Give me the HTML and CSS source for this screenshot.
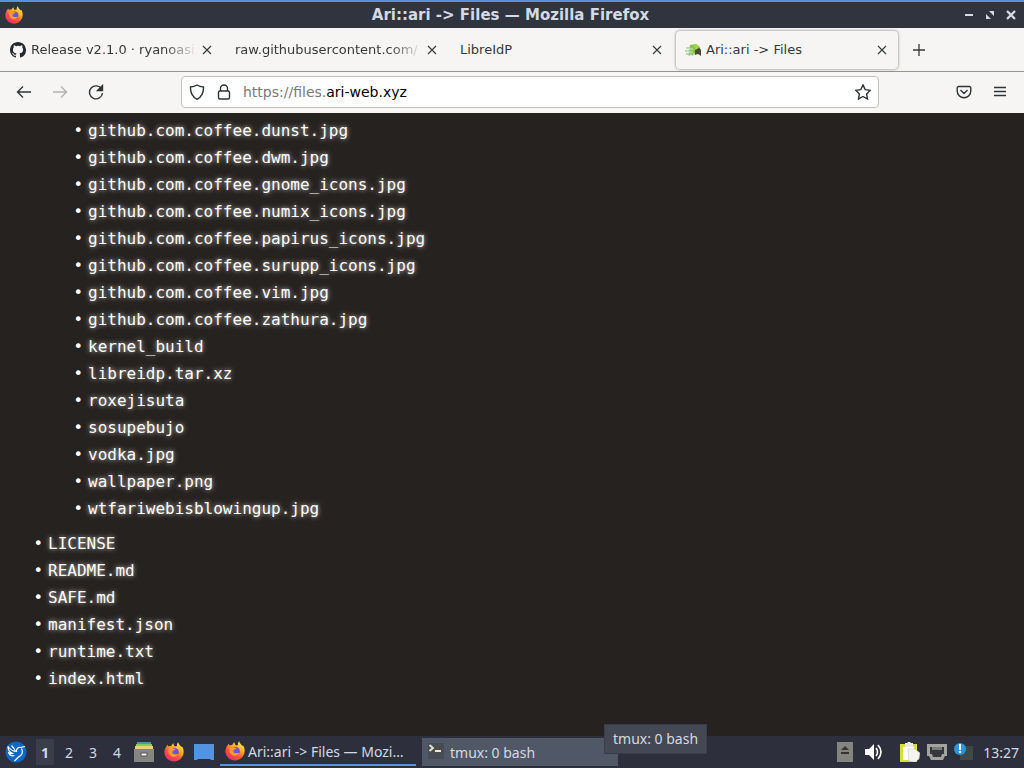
FILE: index.html
```html
<!DOCTYPE html>
<html lang="en">
<head>
    <meta charset="UTF-8">
    <meta name="viewport" content="width=device-width, initial-scale=1.0">
    <title>Ari::ari -&gt; Files</title>
    <link rel="stylesheet" href="styles.css">
</head>
<body>
    <svg class="sprite" aria-hidden="true">
        <defs>
            <linearGradient id="flame" x1="0.85" y1="0.05" x2="0.25" y2="1">
                <stop offset="0" stop-color="#fff04a"/>
                <stop offset="0.35" stop-color="#ffab25"/>
                <stop offset="0.65" stop-color="#ff5236"/>
                <stop offset="1" stop-color="#e3267c"/>
            </linearGradient>
            <radialGradient id="globe">
                <stop offset="0" stop-color="#4b6be0"/>
                <stop offset="1" stop-color="#8a3fc4"/>
            </radialGradient>
        </defs>
        <symbol id="firefox" viewBox="0 0 20 20">
            <path fill="url(#flame)" d="M2.6 4.2 3.5 2.8 4.6 4.5C5.5 4 6.3 3.9 7.2 4.1 7.6 2.8 8.5 1.9 9.6 1.3 9.4 2.6 10 3.6 11 4.4L13 4C12.8 2.4 13.2 1.2 14.2 0.2 14.7 2.3 16.2 3.5 17.4 5L17.9 4.2C19.3 6 19.8 8.3 19.6 10.6 19.1 15.8 15 19.6 10 19.6 4.8 19.6.6 15.6.4 10.6.3 8.2 1.1 6 2.6 4.2Z"/>
            <circle fill="url(#globe)" cx="10.4" cy="10.4" r="4.4"/>
            <path fill="#ff9a2b" d="M4.6 6.2C6.3 5 8.3 5.3 9.6 6.7L11.6 7C11 8.6 9.3 8.2 8.5 9.5 7.8 11 9 12.5 11 12.3 12.2 12.2 13 11.5 14.2 12.2 12.6 15.2 8.6 15.6 6.2 13.2 4.2 11.2 3.7 8.5 4.6 6.2Z"/>
        </symbol>
        <symbol id="close" viewBox="0 0 10 10">
            <path d="M1 1 9 9M9 1 1 9" fill="none" stroke="currentColor" stroke-width="1.1"/>
        </symbol>
    </svg>

    <header class="titlebar">
        <svg class="app-icon"><use href="#firefox"/></svg>
        <span class="window-title">Ari::ari -&gt; Files — Mozilla Firefox</span>
        <div class="window-buttons">
            <button aria-label="Minimize"><svg viewBox="0 0 10 10"><path d="M1 4h8v2H1z"/></svg></button>
            <button aria-label="Restore"><svg viewBox="0 0 10 10"><path d="M4 1h5v5zM1 4l5 5H1z"/></svg></button>
            <button aria-label="Close"><svg viewBox="0 0 10 10"><path d="M1 1 9 9M9 1 1 9" stroke="currentColor" stroke-width="2.4"/></svg></button>
        </div>
    </header>

    <nav class="tabs" aria-label="Tabs">
        <div class="tab">
            <svg class="favicon" viewBox="0 0 16 16"><path fill="#24292f" d="M8 0C3.58 0 0 3.58 0 8c0 3.54 2.29 6.53 5.47 7.59.4.07.55-.17.55-.38 0-.19-.01-.82-.01-1.49-2.01.37-2.53-.49-2.69-.94-.09-.23-.48-.94-.82-1.13-.28-.15-.68-.52-.01-.53.63-.01 1.08.58 1.23.82.72 1.21 1.87.87 2.33.66.07-.52.28-.87.51-1.07-1.78-.2-3.64-.89-3.64-3.95 0-.87.31-1.59.82-2.15-.08-.2-.36-1.02.08-2.12 0 0 .67-.21 2.2.82A7.6 7.6 0 0 1 8 3.86c.68 0 1.36.09 2 .27 1.53-1.04 2.2-.82 2.2-.82.44 1.1.16 1.92.08 2.12.51.56.82 1.27.82 2.15 0 3.07-1.87 3.75-3.65 3.95.29.25.54.73.54 1.48 0 1.07-.01 1.93-.01 2.2 0 .21.15.46.55.38A8 8 0 0 0 16 8c0-4.42-3.58-8-8-8z"/></svg>
            <span class="tab-label faded">Release v2.1.0 · ryanoasi</span>
            <button aria-label="Close tab"><svg><use href="#close"/></svg></button>
        </div>
        <div class="tab">
            <span class="tab-label faded">raw.githubusercontent.com/</span>
            <button aria-label="Close tab"><svg><use href="#close"/></svg></button>
        </div>
        <div class="tab">
            <span class="tab-label">LibreIdP</span>
            <button aria-label="Close tab"><svg><use href="#close"/></svg></button>
        </div>
        <div class="tab active">
            <svg class="favicon" viewBox="0 0 16 16">
                <path fill="#8cc63f" d="M5 3 11 2l3 2 1 4-4 3-7 1z"/>
                <path fill="#4d4a32" d="M10 7l4-2 2 3v6l-3-2-3 1z"/>
                <path fill="#a9d63c" d="M8 3h5l1 3-4 2z"/>
                <path d="M1 6h10M0 9h10M1 12h9M6 3 4 14M9 3 7 14" stroke="#7cc45c" fill="none"/>
                <path d="M3 7h5M2 10h6" stroke="#d6eec4" fill="none"/>
            </svg>
            <span class="tab-label">Ari::ari -&gt; Files</span>
            <button aria-label="Close tab"><svg><use href="#close"/></svg></button>
        </div>
        <button class="new-tab" aria-label="New tab"><svg viewBox="0 0 12 12"><path d="M6 0v12M0 6h12" stroke="currentColor" stroke-width="1.3"/></svg></button>
    </nav>

    <div class="toolbar">
        <div class="nav-buttons">
            <button aria-label="Back"><svg viewBox="0 0 16 16"><path d="M15 8H1.5M7 2.5 1.5 8l5.5 5.5"/></svg></button>
            <button aria-label="Forward" disabled><svg viewBox="0 0 16 16"><path d="M1 8h13.5M9 2.5l5.5 5.5L9 13.5"/></svg></button>
            <button aria-label="Reload"><svg viewBox="0 0 16 16"><path d="M13.6 5A6.5 6.5 0 1 0 14.5 9"/><path d="M14.5 1.5v5h-5z" fill="currentColor"/></svg></button>
        </div>
        <div class="urlbar">
            <svg viewBox="0 0 16 16"><path d="M8 1c2 1.3 4 1.9 6.5 2C14.7 9 12.5 13 8 15.3 3.5 13 1.3 9 1.5 3 4 2.9 6 2.3 8 1z"/></svg>
            <svg viewBox="0 0 16 16"><rect x="2.5" y="7" width="11" height="8" rx="1.5"/><path d="M4.5 7V4.5a3.5 3.5 0 0 1 7 0V7"/></svg>
            <a class="url" href="https://files.ari-web.xyz">https://files.<b>ari-web.xyz</b></a>
            <button aria-label="Bookmark this page"><svg viewBox="0 0 16 16"><path d="M8 .9l2.2 4.7 5.1.7-3.7 3.6.9 5.1L8 12.5 3.5 15l.9-5.1L.7 6.3l5.1-.7z"/></svg></button>
        </div>
        <div class="menu-buttons">
            <button aria-label="Save to Pocket"><svg viewBox="0 0 16 16"><path d="M2.5 2.5h11a1.3 1.3 0 0 1 1.3 1.3V7a6.8 6.8 0 0 1-13.6 0V3.8a1.3 1.3 0 0 1 1.3-1.3zM4.5 6 8 9.5 11.5 6"/></svg></button>
            <button aria-label="Menu"><svg viewBox="0 0 16 16"><path d="M2 3.5h12M2 7.5h12M2 11.5h12"/></svg></button>
        </div>
    </div>

    <main class="page">
        <ul>
            <li class="folder">
                <ul>
                    <li><a href="#">github.com.coffee.dunst.jpg</a></li>
                    <li><a href="#">github.com.coffee.dwm.jpg</a></li>
                    <li><a href="#">github.com.coffee.gnome_icons.jpg</a></li>
                    <li><a href="#">github.com.coffee.numix_icons.jpg</a></li>
                    <li><a href="#">github.com.coffee.papirus_icons.jpg</a></li>
                    <li><a href="#">github.com.coffee.surupp_icons.jpg</a></li>
                    <li><a href="#">github.com.coffee.vim.jpg</a></li>
                    <li><a href="#">github.com.coffee.zathura.jpg</a></li>
                    <li><a href="#">kernel_build</a></li>
                    <li><a href="#">libreidp.tar.xz</a></li>
                    <li><a href="#">roxejisuta</a></li>
                    <li><a href="#">sosupebujo</a></li>
                    <li><a href="#">vodka.jpg</a></li>
                    <li><a href="#">wallpaper.png</a></li>
                    <li><a href="#">wtfariwebisblowingup.jpg</a></li>
                </ul>
            </li>
            <li><a href="#">LICENSE</a></li>
            <li><a href="#">README.md</a></li>
            <li><a href="#">SAFE.md</a></li>
            <li><a href="#">manifest.json</a></li>
            <li><a href="#">runtime.txt</a></li>
            <li><a href="#">index.html</a></li>
        </ul>
    </main>

    <footer class="taskbar">
        <button class="start" aria-label="Applications">
            <svg viewBox="0 0 22 22">
                <circle cx="11" cy="11" r="10.5" fill="#0b68c4"/>
                <path fill="none" stroke="#fff" stroke-width="1.2" stroke-linejoin="round" d="M10.5 10.5C7 10 5 8 3 5.5 3 9 4.5 11.5 8 12.5 6 13 4.500 12.500 3.500 11.500 4.500 14.500 7 15.500 9.500 14.500M10.500 10.500C9.500 8 8 6 6.500 4.500M11.500 11C11 8 13 6 15.500 6.500L20 5.500M16.500 7.500C18.500 11 17 14.500 13.500 16L9.500 20"/>
            </svg>
        </button>
        <div class="desktops">
            <button class="current">1</button>
            <button>2</button>
            <button>3</button>
            <button>4</button>
        </div>
        <div class="launchers">
            <button aria-label="File manager">
                <svg viewBox="0 0 20 20">
                    <path fill="#3f9fa0" d="M3 0h14v5H3z"/>
                    <path fill="#8cc56a" d="M2 2h16v4H2z"/>
                    <path fill="#f0d264" d="M1 4h18v4H1z"/>
                    <path fill="#858582" d="M0 7h20v13H0z"/>
                    <path fill="#fff" stroke="#555" d="M7 11h6v3H7z"/>
                </svg>
            </button>
            <button aria-label="Firefox"><svg><use href="#firefox"/></svg></button>
            <button aria-label="Show desktop"><svg viewBox="0 0 20 20"><path fill="#5294e2" d="M0 2h20v16h-3l-1-1H4l-1 1H0z"/></svg></button>
        </div>
        <button class="task focused">
            <svg><use href="#firefox"/></svg>
            <span>Ari::ari -&gt; Files — Mozi…</span>
        </button>
        <button class="task hovered">
            <svg viewBox="0 0 20 20"><path fill="#484d54" d="M1 1h16v16H1z"/><path d="M2.5 3 6 6 2.5 9M8 9h6" fill="none" stroke="#eee8c8" stroke-width="1.8"/></svg>
            <span>tmux: 0 bash</span>
            <span class="tooltip" role="tooltip">tmux: 0 bash</span>
        </button>
        <div class="tray">
            <svg class="eject" viewBox="0 0 16 20"><path fill="#85857f" d="M0 0h16v20H0z"/><path fill="#343535" d="M8 4l4 4H4zM4 10h8v2H4z"/></svg>
            <svg class="volume" viewBox="0 0 20 20"><path fill="#fff" d="M1 7h4l5-5v16l-5-5H1z"/><path d="M12 6q3 4 0 8M14 3q6 7 0 14" fill="none" stroke="#fff" stroke-width="1.6"/></svg>
            <svg class="clipboard" viewBox="0 0 20 20"><path fill="#d5df3a" d="M0 2h17v18H0z"/><path fill="#fff" d="M3 5h11v13H3z"/><path fill="#e8e8e4" d="M5 1h2l1-1h2l1 1h2v4H5z"/><path fill="#f4f4f2" stroke="#bdbdb8" stroke-width=".5" d="M8 7h7l5 4-1 6-4 3-6-1z"/></svg>
            <svg class="network" viewBox="0 0 20 20"><path fill="#a3a39f" d="M0 2h20v12h-2l-2 4H4l-2-4H0z"/><path fill="#34373b" d="M3 5h14v7h-2l-1 3H6l-1-3H3z"/><path d="M6 5v3M8 5v3M10 5v3M12 5v3M14 5v3" stroke="#c2c2be"/></svg>
            <svg class="notice" viewBox="0 0 20 20"><path fill="#3c4947" d="M6 4h13v14H6z"/><circle cx="6" cy="7" r="6" fill="#2f93e0"/><path fill="#fff" d="M5 2h2v6H5zM5 9h2v2H5z"/></svg>
            <time class="clock">13:27</time>
        </div>
    </footer>
</body>
</html>
```
FILE: styles.css
```css
* {
    box-sizing: border-box;
}

body {
    display: flex;
    flex-direction: column;
    height: 100vh;
    margin: 0;
    overflow: hidden;
    background-color: #262220;
    font-family: "DejaVu Sans", sans-serif;
    font-size: 14px;
}

button {
    display: flex;
    align-items: center;
    justify-content: center;
    margin: 0;
    padding: 0;
    border: none;
    background: none;
    color: inherit;
    font: inherit;
}

svg {
    flex: none;
}

.sprite {
    position: absolute;
    width: 0;
    height: 0;
}

/* Window title */
.titlebar {
    display: grid;
    grid-template-columns: 1fr auto 1fr;
    align-items: center;
    height: 28px;
    padding: 0 8px 0 5px;
    border-top: 2px solid #5294e2;
    background-color: #2f343f;
    color: #d3dae3;
}

.app-icon {
    width: 18px;
    height: 18px;
}

.window-title {
    font-size: 15px;
    font-weight: bold;
}

.window-buttons {
    display: flex;
    justify-content: flex-end;
    gap: 11px;
}

.window-buttons svg {
    width: 10px;
    height: 10px;
    fill: currentColor;
}

/* Tabs */
.tabs {
    display: flex;
    align-items: center;
    gap: 3px;
    height: 44px;
    padding-left: 1px;
    border-bottom: 1px solid #95958f;
    background-color: #f6f5f4;
    color: #36393a;
}

.tab {
    display: flex;
    flex: 0 1 222px;
    align-items: center;
    gap: 5px;
    height: 38px;
    padding: 0 11px 0 9px;
    min-width: 0;
}

.tab.active {
    border-radius: 4px;
    box-shadow: 0 0 3px rgba(0, 0, 0, 0.5);
}

.tab-label {
    flex: 1;
    overflow: hidden;
    white-space: nowrap;
    font-size: 13px;
}

.tab-label.faded {
    mask-image: linear-gradient(to left, transparent, #000 32px);
}

.favicon {
    width: 16px;
    height: 16px;
}

.tab button svg {
    width: 10px;
    height: 10px;
}

.new-tab {
    width: 36px;
    height: 36px;
}

.new-tab svg {
    width: 12px;
    height: 12px;
}

/* Address bar */
.toolbar {
    display: flex;
    align-items: center;
    justify-content: space-between;
    height: 41px;
    padding: 0 16px 2px;
    background-color: #f6f5f4;
    color: #2e3436;
}

.toolbar svg {
    width: 16px;
    height: 16px;
    fill: none;
    stroke: currentColor;
    stroke-width: 1.4;
}

.nav-buttons,
.menu-buttons {
    display: flex;
    flex: 1;
    gap: 20px;
}

.menu-buttons {
    flex: 0 1 129px;
    justify-content: flex-end;
}

.nav-buttons button:disabled {
    opacity: 0.35;
}

.urlbar {
    display: flex;
    flex: 0 1 698px;
    align-items: center;
    gap: 11px;
    height: 32px;
    padding: 0 7px;
    border: 1px solid #c3c3bb;
    border-radius: 4px;
    background-color: #fff;
}

.url {
    flex: 1;
    color: #787878;
    text-decoration: none;
}

.url b {
    color: #000;
    font-weight: normal;
}

/* File list */
.page {
    flex: 1;
    min-height: 0;
    padding: 4px 8px;
    overflow: hidden;
    color: #fff;
    font-family: "DejaVu Sans Mono", monospace;
    font-size: 16px;
    line-height: 27px;
}

.page ul {
    margin: 0;
    padding-left: 40px;
    list-style: "• ";
}

.page li::marker {
    font-family: "DejaVu Sans", sans-serif;
}

.page .folder {
    list-style: none;
}

.page ul ul {
    margin-bottom: 8px;
}

.page a {
    color: #fff;
    text-decoration: none;
    text-shadow: 0 0 5px rgba(255, 250, 240, 0.8);
}

/* Taskbar */
.taskbar {
    display: flex;
    align-items: center;
    height: 32px;
    padding: 0 5px;
    background-color: #2d303c;
    color: #d3dae3;
    font-family: "Noto Sans", sans-serif;
}

.start svg {
    width: 22px;
    height: 22px;
}

.desktops {
    display: flex;
    gap: 6px;
    margin-left: 9px;
}

.desktops button {
    width: 18px;
    height: 26px;
}

.desktops .current {
    background-color: #3a3d4a;
    font-weight: bold;
}

.launchers {
    display: flex;
    gap: 10px;
    margin-left: 8px;
}

.launchers svg,
.task svg {
    width: 20px;
    height: 20px;
}

.task {
    position: relative;
    flex: 0 1 196px;
    justify-content: flex-start;
    gap: 3px;
    min-width: 0;
    height: 28px;
    margin-left: 6px;
    padding: 0 5px;
}

.task span {
    white-space: nowrap;
}

.task.focused {
    border-bottom: 2px solid #5294e2;
}

.task.hovered {
    background-color: #505766;
}

.task .tooltip {
    position: absolute;
    bottom: 12px;
    left: 182px;
    padding: 4px 8px;
    border: 1px solid #3a3e4a;
    background-color: #434854;
    line-height: 20px;
}

.tray {
    display: flex;
    align-items: center;
    gap: 7px;
    margin-left: auto;
}

.tray svg {
    width: 20px;
    height: 20px;
}

.tray .eject {
    width: 16px;
    margin-right: 4px;
}

.tray .volume {
    margin-right: 9px;
}

.clock {
    margin-left: 2px;
}
```
